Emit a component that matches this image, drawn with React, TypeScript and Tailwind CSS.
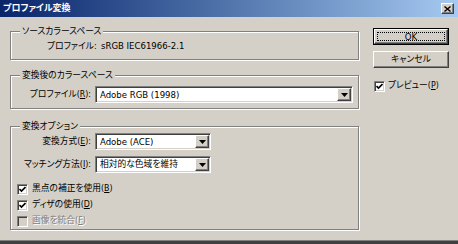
import React from "react";

const raised =
  "border border-t-white border-l-white border-b-[#404040] border-r-[#404040] shadow-[inset_-1px_-1px_0_#808080,inset_1px_1px_0_#d4d0c8]";

function U({ c }: { c: string }) {
  return <span className="underline underline-offset-[1px]">{c}</span>;
}

function Group({ label, className, children }: { label: string; className: string; children?: React.ReactNode }) {
  return (
    <div
      className={
        "relative w-[349px] border border-[#808080] shadow-[inset_1px_1px_0_#fff,1px_1px_0_#fff] " + className
      }
    >
      <span className="absolute left-[9px] top-[-7px] px-[2px] bg-[#d4d0c8] leading-[12px] whitespace-nowrap">
        {label}
      </span>
      {children}
    </div>
  );
}

function Select({ value, w, latin }: { value: string; w: string; latin?: boolean }) {
  return (
    <div
      className={
        "h-[17px] flex items-stretch bg-white border border-t-[#808080] border-l-[#808080] border-b-white border-r-white shadow-[inset_1px_1px_0_#404040,inset_-1px_-1px_0_#d4d0c8] " +
        w
      }
    >
      <div className={"flex-1 flex items-center pl-[4px] leading-none whitespace-nowrap " + (latin ? "text-[9.5px]" : "")}>
        {value}
      </div>
      <div className={"w-[14px] m-[1px] bg-[#d4d0c8] flex items-center justify-center " + raised}>
        <svg width="7" height="4" viewBox="0 0 7 4">
          <path d="M0 0H7L3.5 4Z" fill="#000" />
        </svg>
      </div>
    </div>
  );
}

function Check({ checked, disabled }: { checked: boolean; disabled?: boolean }) {
  return (
    <div
      className={
        "w-[11px] h-[11px] shrink-0 flex items-center justify-center border border-t-[#808080] border-l-[#808080] border-b-white border-r-white shadow-[inset_1px_1px_0_#404040,inset_-1px_-1px_0_#d4d0c8] " +
        (disabled ? "bg-[#d4d0c8]" : "bg-white")
      }
    >
      {checked && (
        <svg width="7" height="7" viewBox="0 0 7 7">
          <path d="M0.5 3 L2.5 5 L6.5 1" stroke="#000" strokeWidth="1.6" fill="none" />
        </svg>
      )}
    </div>
  );
}

export default function App() {
  return (
    <div className="w-[458px] h-[244px] bg-[#d4d0c8] flex flex-col overflow-hidden text-[8.75px] text-black font-['DejaVu_Sans_Condensed','Noto_Sans_CJK_JP',sans-serif] [font-feature-settings:'palt'] border-b-[3px] border-b-[#404040]">
      {/* title bar */}
      <div className="h-[17px] shrink-0 flex items-center justify-between bg-linear-to-r from-[#0a246a] to-[#a6caf0] pl-[3px] pr-[4px]">
        <span className="text-white font-bold text-[9px] leading-none">プロファイル変換</span>
        <div className={"w-[13px] h-[11px] bg-[#d4d0c8] flex items-center justify-center " + raised}>
          <svg width="7" height="6" viewBox="0 0 7 6">
            <path d="M0.5 0.5L6.5 5.5M6.5 0.5L0.5 5.5" stroke="#000" strokeWidth="1.4" />
          </svg>
        </div>
      </div>

      {/* body */}
      <div className="flex-1 flex pl-[10px] pt-[11px] border-b border-b-[#808080]">
        <div className="flex flex-col pt-[3px]">
          <Group label="ソースカラースペース" className="h-[29px]">
            <div className="flex items-center pl-[36px] pt-[8px] leading-[12px] whitespace-nowrap">
              <span className="w-[54px] shrink-0">プロファイル:</span>
              <span className="text-[9.5px]">sRGB IEC61966-2.1</span>
            </div>
          </Group>

          <Group label="変換後のカラースペース" className="h-[34px] mt-[15px]">
            <div className="flex items-center pt-[10px]">
              <span className="w-[81px] shrink-0 text-right pr-[1px] whitespace-nowrap">
                プロファイル(<U c="R" />):
              </span>
              <div className="ml-[3px]">
                <Select value="Adobe RGB (1998)" w="w-[258px]" latin />
              </div>
            </div>
          </Group>

          <Group label="変換オプション" className="h-[104px] mt-[17px]">
            <div className="flex flex-col pt-[6px]">
              <div className="flex items-center">
                <span className="w-[81px] shrink-0 text-right pr-[1px] whitespace-nowrap">
                  変換方式(<U c="E" />):
                </span>
                <div className="ml-[3px]">
                  <Select value="Adobe (ACE)" w="w-[116px]" latin />
                </div>
              </div>
              <div className="flex items-center mt-[6px]">
                <span className="w-[81px] shrink-0 text-right pr-[1px] whitespace-nowrap">
                  マッチング方法(<U c="I" />):
                </span>
                <div className="ml-[3px]">
                  <Select value="相対的な色域を維持" w="w-[116px]" />
                </div>
              </div>
              <div className="flex flex-col pl-[6px] mt-[8px]">
                <div className="h-[16px] flex items-center gap-[4px]">
                  <Check checked />
                  <span>
                    黒点の補正を使用(<U c="B" />)
                  </span>
                </div>
                <div className="h-[16px] flex items-center gap-[4px]">
                  <Check checked />
                  <span>
                    ディザの使用(<U c="D" />)
                  </span>
                </div>
                <div className="h-[16px] flex items-center gap-[4px]">
                  <Check checked={false} disabled />
                  <span className="text-[#808080] [text-shadow:1px_1px_0_#fff]">
                    画像を統合(<U c="F" />)
                  </span>
                </div>
              </div>
            </div>
          </Group>
        </div>

        {/* right column */}
        <div className="ml-[14px] w-[76px] flex flex-col">
          <div className="h-[17px] border border-black">
            <div className={"h-full bg-[#d4d0c8] flex items-center justify-center p-[2px] " + raised}>
              <div className="w-full h-full border border-dotted border-black flex items-center justify-center leading-none text-[9.5px]">
                OK
              </div>
            </div>
          </div>
          <div className={"h-[17px] mt-[6px] bg-[#d4d0c8] flex items-center justify-center leading-none " + raised}>
            キャンセル
          </div>
          <div className="mt-[11px] h-[14px] flex items-center gap-[3px] pl-[1px]">
            <Check checked />
            <span>
              プレビュー(<U c="P" />)
            </span>
          </div>
        </div>
      </div>
    </div>
  );
}
